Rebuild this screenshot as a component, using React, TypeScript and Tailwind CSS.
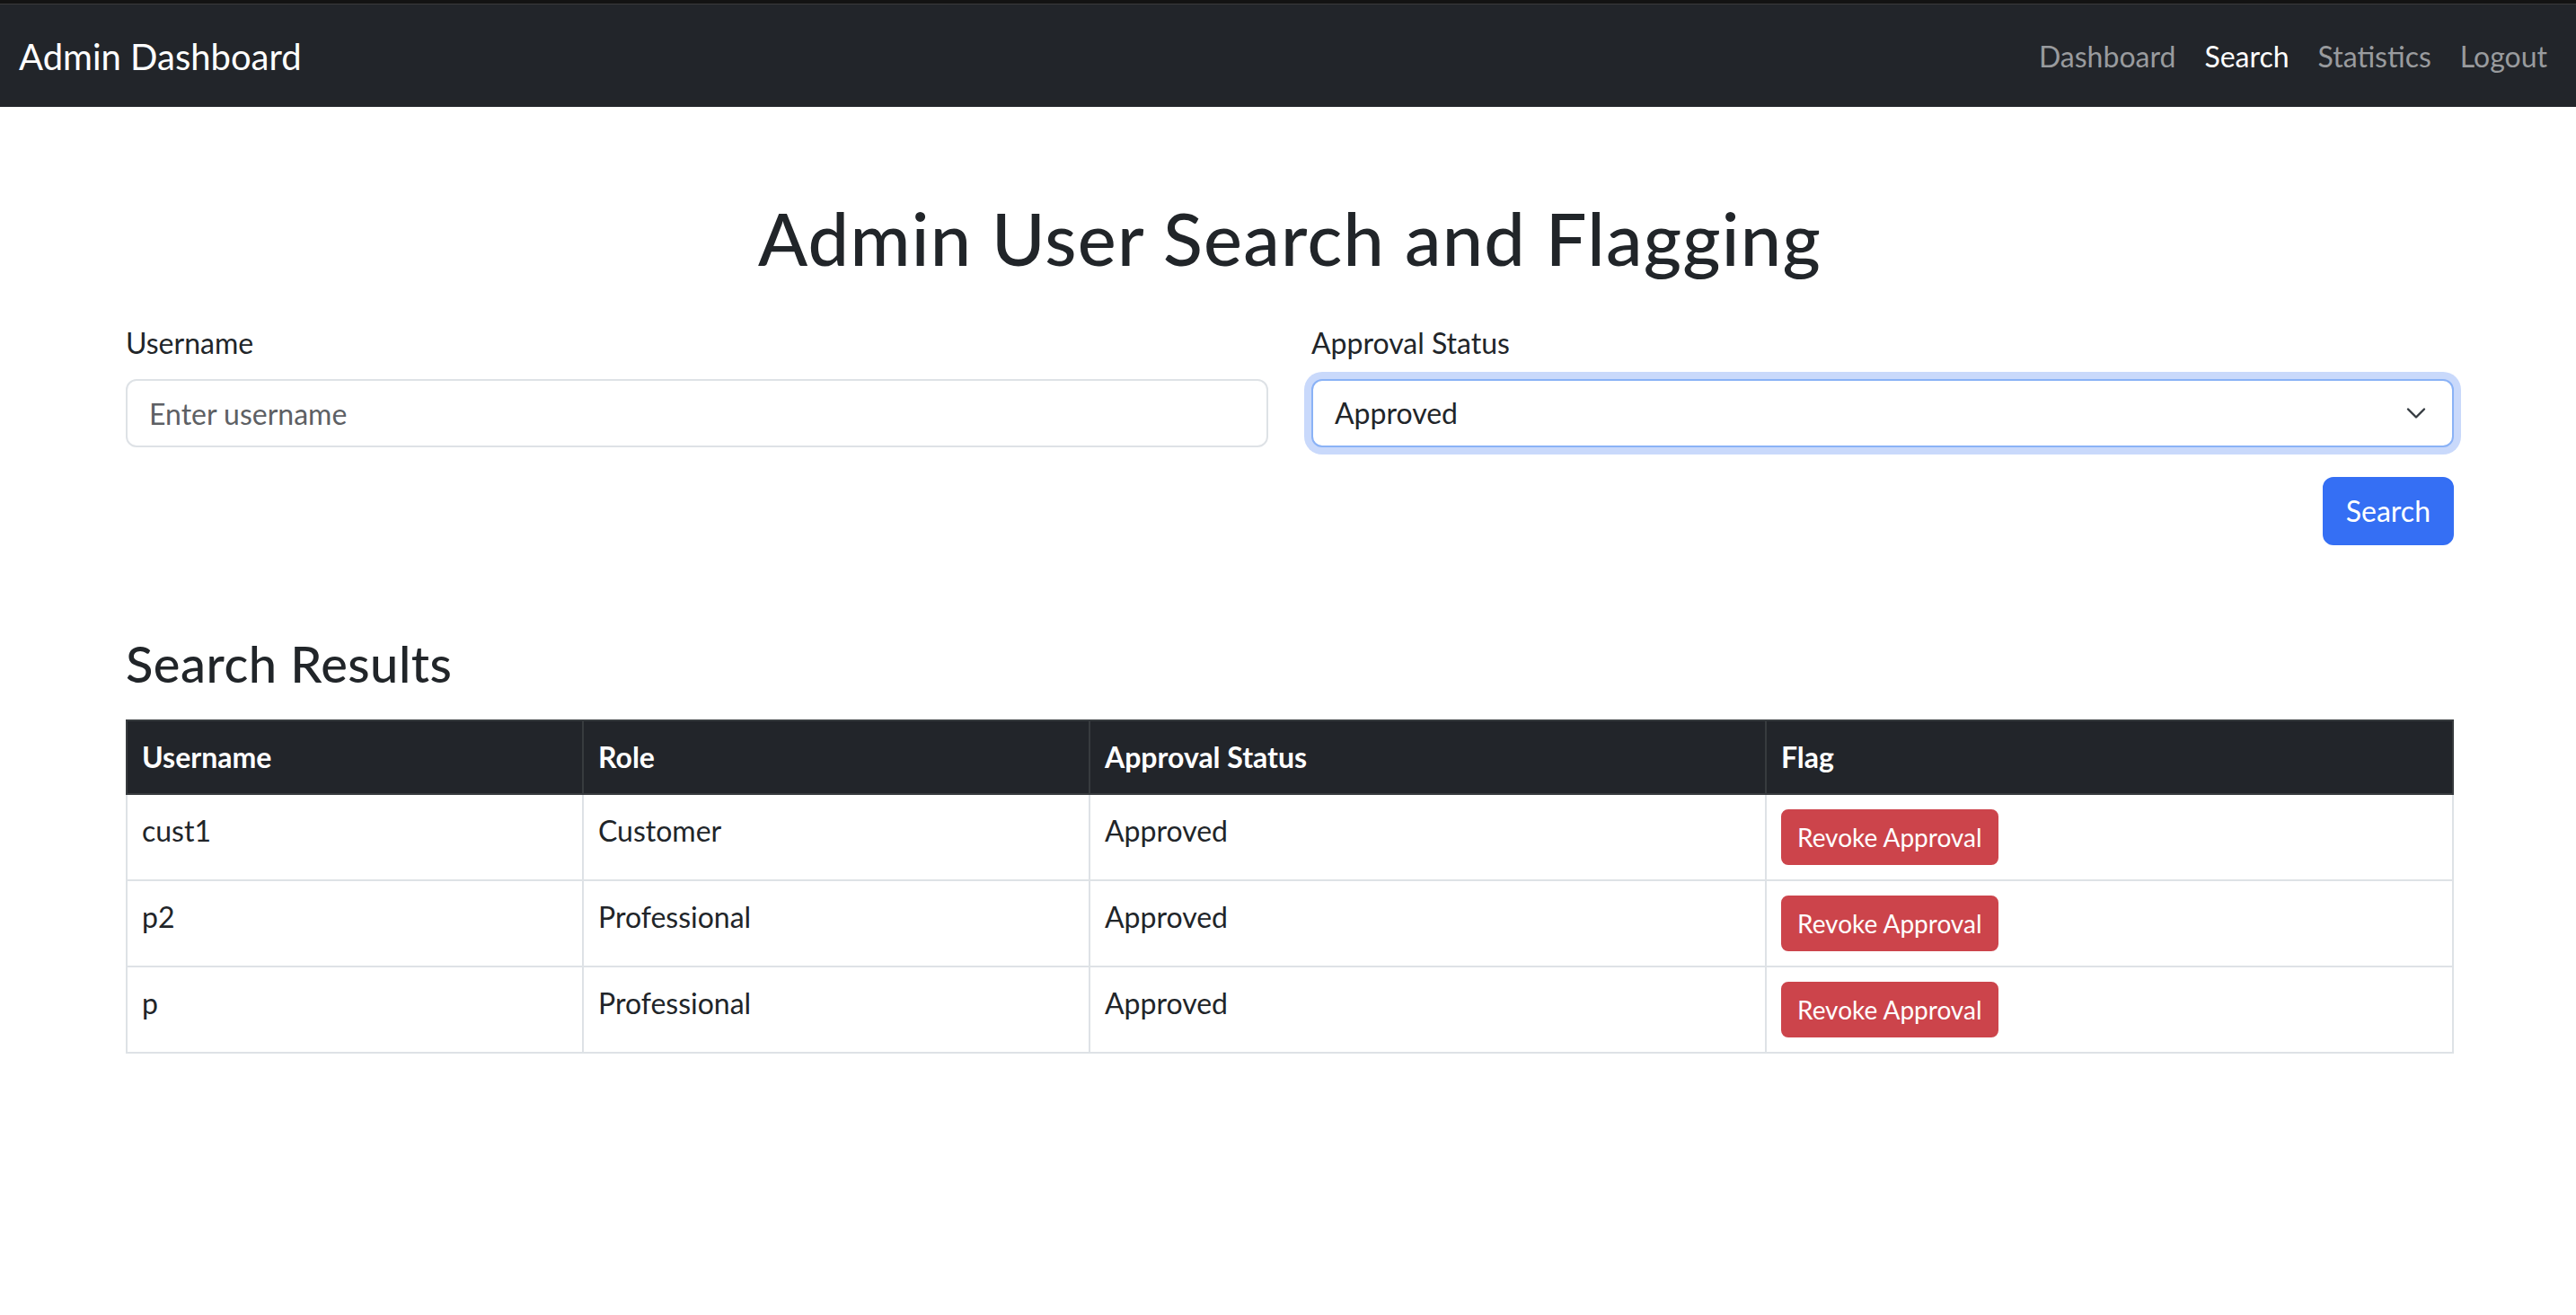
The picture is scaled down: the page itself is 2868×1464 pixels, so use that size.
const navLinks = [
  { label: "Dashboard", active: false },
  { label: "Search", active: true },
  { label: "Statistics", active: false },
  { label: "Logout", active: false },
];

const results = [
  { username: "cust1", role: "Customer", status: "Approved" },
  { username: "p2", role: "Professional", status: "Approved" },
  { username: "p", role: "Professional", status: "Approved" },
];

function Chevron() {
  return (
    <svg width="32" height="24" viewBox="0 0 16 16" className="shrink-0">
      <path
        d="m2 5 6 6 6-6"
        fill="none"
        stroke="#343a40"
        strokeLinecap="round"
        strokeLinejoin="round"
        strokeWidth="1.6"
      />
    </svg>
  );
}

export default function App() {
  return (
    <div className="bg-white font-['Lato',sans-serif] text-[#212529]">
      <div className="h-[4px] bg-[#131313]" />
      <div className="h-px bg-[#3b3b3b]" />

      <nav className="flex items-center justify-between bg-[#22252a] pt-[18px] pb-[16px] pl-[21px] pr-[16px]">
        <span className="py-[10px] text-[40px] leading-[60px] text-white">Admin Dashboard</span>
        <ul className="flex">
          {navLinks.map((link) => (
            <li key={link.label}>
              <a
                href="#"
                className={
                  link.active
                    ? "block px-4 py-4 text-[32px] leading-[48px] text-white"
                    : "block px-4 py-4 text-[32px] leading-[48px] text-[#999b9e]"
                }
              >
                {link.label}
              </a>
            </li>
          ))}
        </ul>
      </nav>

      <main className="ml-[140px] w-[2592px] pt-[98px] pb-[60px]">
        <h1 className="text-center text-[81px] font-medium leading-[96px] tracking-[1.3px]">
          Admin User Search and Flagging
        </h1>

        <div className="mt-[45px] grid grid-cols-2 gap-x-12">
          <div>
            <label className="mb-4 block text-[32px] leading-[48px]">Username</label>
            <input
              type="text"
              placeholder="Enter username"
              className="block h-[76px] w-full rounded-xl border-2 border-[#dee2e6] bg-white px-6 text-[32px] outline-none placeholder:text-[#5d6064]"
            />
          </div>
          <div>
            <label className="mb-4 block text-[32px] leading-[48px]">Approval Status</label>
            <div className="flex h-[76px] w-full items-center justify-between rounded-xl border-2 border-[#8ab2f6] bg-white pl-6 pr-6 shadow-[0_0_0_8px_#c9d9fb]">
              <span className="text-[32px] leading-[48px]">Approved</span>
              <Chevron />
            </div>
          </div>
        </div>

        <div className="mt-[33px] flex justify-end">
          <button className="h-[76px] rounded-xl border-2 border-[#356ff4] bg-[#356ff4] px-6 text-[32px] leading-[48px] text-white">
            Search
          </button>
        </div>

        <h3 className="mt-[98px] mb-[29px] text-[56px] font-medium leading-[67px] tracking-[0.5px]">
          Search Results
        </h3>

        <table className="w-full table-fixed border-collapse">
          <colgroup>
            <col className="w-[508px]" />
            <col className="w-[564px]" />
            <col className="w-[753px]" />
            <col />
          </colgroup>
          <thead>
            <tr>
              {["Username", "Role", "Approval Status", "Flag"].map((h) => (
                <th
                  key={h}
                  className="border-2 border-[#373b3e] bg-[#22252a] px-4 py-4 text-left text-[32px] font-bold leading-[48px] text-white"
                >
                  {h}
                </th>
              ))}
            </tr>
          </thead>
          <tbody>
            {results.map((r) => (
              <tr key={r.username}>
                <td className="border-2 border-[#dee2e6] px-4 py-4 align-top text-[32px] leading-[48px]">{r.username}</td>
                <td className="border-2 border-[#dee2e6] px-4 py-4 align-top text-[32px] leading-[48px]">{r.role}</td>
                <td className="border-2 border-[#dee2e6] px-4 py-4 align-top text-[32px] leading-[48px]">{r.status}</td>
                <td className="border-2 border-[#dee2e6] px-4 py-4 align-top text-[32px] leading-[48px]">
                  <button className="inline-block rounded-lg border-2 border-[#cc444b] bg-[#cc444b] px-4 py-2 align-top text-[28px] leading-[42px] text-white">
                    Revoke Approval
                  </button>
                </td>
              </tr>
            ))}
          </tbody>
        </table>
      </main>
    </div>
  );
}
